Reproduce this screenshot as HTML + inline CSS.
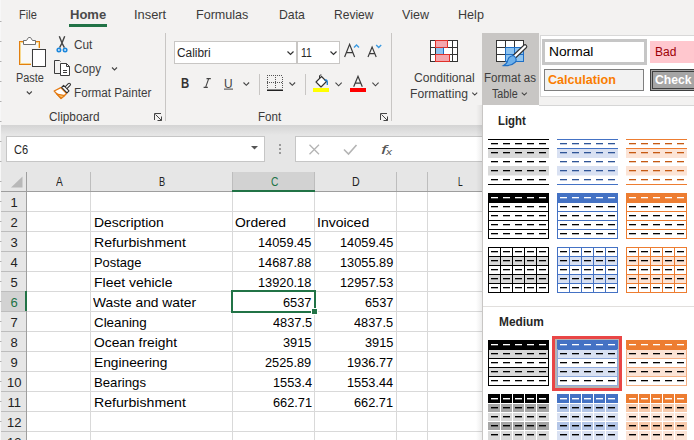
<!DOCTYPE html>
<html><head><meta charset="utf-8"><style>
html,body{margin:0;padding:0;}
body{width:694px;height:440px;position:relative;overflow:hidden;background:#fff;font-family:"Liberation Sans",sans-serif;}
.t{position:absolute;white-space:nowrap;line-height:1;transform-origin:0 0;}
svg{position:absolute;overflow:visible}
</style></head><body>
<div style="position:absolute;left:0px;top:0px;width:694px;height:125px;background:#f3f2f1"></div>
<div style="position:absolute;left:0px;top:125px;width:694px;height:47px;background:#e6e6e6"></div>
<div style="position:absolute;left:0px;top:125px;width:694px;height:10px;background:linear-gradient(#d4d4d4,#e6e6e6)"></div>
<div class="t" style="left:18.50px;top:8.00px;font-size:13px;color:#3b3a39;transform:scaleX(0.8499);">File</div>
<div class="t" style="left:69.70px;top:8.00px;font-size:13px;color:#4a4a4a;font-weight:bold;transform:scaleX(1.0024);">Home</div>
<div style="position:absolute;left:69px;top:24px;width:38px;height:3px;background:#217346"></div>
<div class="t" style="left:133.80px;top:8.00px;font-size:13px;color:#3b3a39;transform:scaleX(0.9904);">Insert</div>
<div class="t" style="left:196.40px;top:8.00px;font-size:13px;color:#3b3a39;transform:scaleX(0.9671);">Formulas</div>
<div class="t" style="left:278.50px;top:8.00px;font-size:13px;color:#3b3a39;transform:scaleX(0.9429);">Data</div>
<div class="t" style="left:334.40px;top:8.00px;font-size:13px;color:#3b3a39;transform:scaleX(0.9258);">Review</div>
<div class="t" style="left:402.00px;top:8.00px;font-size:13px;color:#3b3a39;transform:scaleX(0.9651);">View</div>
<div class="t" style="left:457.50px;top:8.00px;font-size:13px;color:#3b3a39;transform:scaleX(0.9686);">Help</div>
<div class="t" style="left:16.40px;top:71.75px;font-size:12.5px;color:#3d3d3d;transform:scaleX(0.8729);">Paste</div>
<div class="t" style="left:73.50px;top:38.75px;font-size:12.5px;color:#3d3d3d;transform:scaleX(0.9460);">Cut</div>
<div class="t" style="left:73.50px;top:63.05px;font-size:12.5px;color:#3d3d3d;transform:scaleX(0.9254);">Copy</div>
<div class="t" style="left:73.50px;top:87.05px;font-size:12.5px;color:#3d3d3d;transform:scaleX(0.9351);">Format Painter</div>
<div class="t" style="left:49.40px;top:110.75px;font-size:12.5px;color:#3b3a39;transform:scaleX(0.9458);">Clipboard</div>
<div class="t" style="left:258.40px;top:110.75px;font-size:12.5px;color:#3b3a39;transform:scaleX(0.9275);">Font</div>
<div style="position:absolute;left:165px;top:33px;width:1px;height:88px;background:#c8c6c4"></div>
<div style="position:absolute;left:391px;top:33px;width:1px;height:88px;background:#c8c6c4"></div>
<svg style="left:0;top:0" width="694" height="130" viewBox="0 0 694 130"><rect x="19.5" y="41.5" width="20" height="23" fill="#f8f8f8" stroke="#e27f0f" stroke-width="1"/><rect x="20.5" y="42.5" width="18" height="21" fill="none" stroke="#f7d88f" stroke-width="1"/><path d="M23.5 44.5 V40.5 H26.5 L28.5 37.5 H30.5 L32.5 40.5 H35.5 V44.5 Z" fill="#fff" stroke="#707070" stroke-width="1"/><rect x="31" y="48" width="16" height="19.5" fill="#f3f2f1"/><rect x="32.5" y="49.5" width="13" height="17" fill="#fff" stroke="#3c3c3c" stroke-width="1"/><path d="M59.3 36.3 L62 43 L59.6 47.6 M64.7 36.3 L62 43 L64.4 47.6" fill="none" stroke="#444" stroke-width="1.4"/><circle cx="58.9" cy="49.9" r="1.75" fill="#cfe4f7" stroke="#1b87dc" stroke-width="1.5"/><circle cx="65.1" cy="49.9" r="1.75" fill="#cfe4f7" stroke="#1b87dc" stroke-width="1.5"/><path d="M60.5 73.5 H54.5 V60.5 H59.5 L60.5 61.5" fill="none" stroke="#3c3c3c" stroke-width="1"/><path d="M60.5 63.5 H66.5 L69.5 66.5 V75.5 H60.5 Z" fill="#fff" stroke="#3c3c3c" stroke-width="1"/><path d="M66.5 63.5 V66.5 H69.5" fill="none" stroke="#3c3c3c" stroke-width="1"/><path d="M63 70.5 H67 M63 72.5 H67" stroke="#3c3c3c" stroke-width="1"/><path d="M54.2 91 L60.8 87.6 L66.6 93.6 L61 98.6 Z" fill="#fff" stroke="#e47a12" stroke-width="1.3" stroke-linejoin="round"/><path d="M56.8 94 L64.8 95.6 L61.2 98.2 Z" fill="#f7c46a" stroke="#e47a12" stroke-width="1.1" stroke-linejoin="round"/><path d="M65.8 88 L69.2 84.6" stroke="#333" stroke-width="3.6" stroke-linecap="round"/><path d="M65.8 88 L69.2 84.6" stroke="#fff" stroke-width="1.4" stroke-linecap="round"/><path d="M61.6 87.4 L63.6 85.4 L69 90.8 L67 92.8 Z" fill="#fff" stroke="#333" stroke-width="1.1" stroke-linejoin="round"/><path d="M26.8 91.5 L29.3 94 L31.8 91.5" fill="none" stroke="#444" stroke-width="1.1"/><path d="M112 67.5 L114.5 70 L117 67.5" fill="none" stroke="#444" stroke-width="1.1"/><path d="M154.5 120 V113.5 H161 M155.5 114.5 L161.5 120.5 M161.5 116.5 V120.5 H157.5" fill="none" stroke="#444" stroke-width="1"/><path d="M380.5 120 V113.5 H387 M381.5 114.5 L387.5 120.5 M387.5 116.5 V120.5 H383.5" fill="none" stroke="#444" stroke-width="1"/></svg>
<div style="position:absolute;left:174px;top:41px;width:123px;height:23px;background:#fff;border:1px solid #c8c6c4;box-sizing:border-box"></div>
<div style="position:absolute;left:297px;top:41px;width:43px;height:23px;background:#fff;border:1px solid #c8c6c4;box-sizing:border-box"></div>
<div class="t" style="left:177.40px;top:46.75px;font-size:12.5px;color:#262626;transform:scaleX(0.9485);">Calibri</div>
<div class="t" style="left:300.50px;top:46.75px;font-size:12.5px;color:#262626;transform:scaleX(0.8324);">11</div>
<div class="t" style="left:181.20px;top:76.00px;font-size:14px;color:#333;font-weight:bold;transform:scaleX(0.8112);">B</div>
<div class="t" style="left:224.20px;top:77.00px;font-size:13px;color:#444;transform:scaleX(0.9163);">U</div>
<svg style="left:0;top:0" width="694" height="130" viewBox="0 0 694 130"><g fill="#555"><rect x="267" y="75" width="1" height="1"/><rect x="267" y="82" width="1" height="1"/><rect x="269" y="75" width="1" height="1"/><rect x="269" y="82" width="1" height="1"/><rect x="271" y="75" width="1" height="1"/><rect x="271" y="82" width="1" height="1"/><rect x="273" y="75" width="1" height="1"/><rect x="273" y="82" width="1" height="1"/><rect x="275" y="75" width="1" height="1"/><rect x="275" y="82" width="1" height="1"/><rect x="277" y="75" width="1" height="1"/><rect x="277" y="82" width="1" height="1"/><rect x="279" y="75" width="1" height="1"/><rect x="279" y="82" width="1" height="1"/><rect x="281" y="75" width="1" height="1"/><rect x="281" y="82" width="1" height="1"/><rect x="267" y="77" width="1" height="1"/><rect x="282" y="77" width="1" height="1"/><rect x="275" y="77" width="1" height="1"/><rect x="267" y="79" width="1" height="1"/><rect x="282" y="79" width="1" height="1"/><rect x="275" y="79" width="1" height="1"/><rect x="267" y="81" width="1" height="1"/><rect x="282" y="81" width="1" height="1"/><rect x="275" y="81" width="1" height="1"/><rect x="267" y="83" width="1" height="1"/><rect x="282" y="83" width="1" height="1"/><rect x="275" y="83" width="1" height="1"/><rect x="267" y="85" width="1" height="1"/><rect x="282" y="85" width="1" height="1"/><rect x="275" y="85" width="1" height="1"/><rect x="267" y="87" width="1" height="1"/><rect x="282" y="87" width="1" height="1"/><rect x="275" y="87" width="1" height="1"/></g><path d="M206.5 78.6 H210.8 M208.7 78.6 L205.6 87.4 M203.6 87.4 H207.8" fill="none" stroke="#444" stroke-width="1.1"/><path d="M344.6 57 L349.6 44.3 L354.6 57 M346.3 52.6 H352.9" fill="none" stroke="#3a3a3a" stroke-width="1.2"/><path d="M368 57 L372.1 47 L376.2 57 M369.4 53.6 H374.8" fill="none" stroke="#3a3a3a" stroke-width="1.15"/><path d="M353.7 86.8 L358 76.3 L362.3 86.8 M355.2 83.1 H360.8" fill="none" stroke="#3a3a3a" stroke-width="1.2"/></svg>
<svg style="left:0;top:0" width="694" height="130" viewBox="0 0 694 130"><path d="M287.5 51.5 L290.5 54.5 L293.5 51.5" fill="none" stroke="#333" stroke-width="1.2"/><path d="M330.5 51.5 L333.5 54.5 L336.5 51.5" fill="none" stroke="#333" stroke-width="1.2"/><path d="M354 47.5 L356.5 45 L359 47.5" fill="none" stroke="#3b9ae1" stroke-width="1.4"/><path d="M376.2 45 L378.7 47.5 L381.2 45" fill="none" stroke="#3b9ae1" stroke-width="1.4"/><rect x="224" y="88.6" width="9" height="1" fill="#444"/><path d="M243.5 82.5 L246.3 85.3 L249.1 82.5" fill="none" stroke="#444" stroke-width="1.1"/><rect x="259" y="74" width="1" height="21" fill="#c8c6c4"/><rect x="305" y="74" width="1" height="21" fill="#c8c6c4"/><rect x="267" y="89.5" width="16" height="1.5" fill="#222"/><path d="M289.5 82.5 L292.3 85.3 L295.1 82.5" fill="none" stroke="#444" stroke-width="1.1"/><path d="M316 82 L321.5 76.5 L326.5 81.5 L321 87 Z" fill="#fff" stroke="#333" stroke-width="1.1" stroke-linejoin="round"/><path d="M319.5 78.5 V76 Q319.8 74.5 321.5 75" fill="none" stroke="#333" stroke-width="1"/><path d="M324.5 80.5 Q327 79 327.3 82 V85" fill="none" stroke="#1e7fd0" stroke-width="1.3"/><rect x="313" y="88" width="16" height="4" fill="#ffff00"/><path d="M335.5 82.7 L338.6 85.8 L341.7 82.7" fill="none" stroke="#444" stroke-width="1.1"/><rect x="350" y="88" width="16" height="4" fill="#ff0000"/><path d="M372.4 82.7 L375.5 85.8 L378.6 82.7" fill="none" stroke="#444" stroke-width="1.1"/></svg>
<div style="position:absolute;left:482px;top:33px;width:57px;height:73px;background:#c8c6c4"></div>
<div class="t" style="left:413.70px;top:72.05px;font-size:12.5px;color:#3d3d3d;transform:scaleX(0.9722);">Conditional</div>
<div class="t" style="left:409.50px;top:87.55px;font-size:12.5px;color:#3d3d3d;transform:scaleX(0.9692);">Formatting</div>
<div class="t" style="left:484.00px;top:72.25px;font-size:12.5px;color:#3d3d3d;transform:scaleX(0.9242);">Format as</div>
<div class="t" style="left:492.00px;top:87.65px;font-size:12.5px;color:#3d3d3d;transform:scaleX(0.8599);">Table</div>
<svg style="left:0;top:0" width="694" height="130" viewBox="0 0 694 130"><path d="M472.3 92.7 L474.75 95.1 L477.2 92.7" fill="none" stroke="#444" stroke-width="1.1"/><path d="M521.8 92.7 L524.3 95.1 L526.8 92.7" fill="none" stroke="#444" stroke-width="1.1"/><rect x="430.5" y="40.5" width="27" height="21" fill="#fff" stroke="#333" stroke-width="1"/><path d="M435.5 40.5 V61.5 M452.5 40.5 V61.5 M430.5 47.5 H457.5 M430.5 54.5 H457.5" fill="none" stroke="#333" stroke-width="1"/><rect x="435.5" y="40.5" width="12" height="7" fill="#f4a6ad" stroke="#e0302a" stroke-width="1"/><rect x="436" y="48" width="7" height="6" fill="#8cc2f0"/><path d="M443.5 47.5 V54.5" stroke="#1b6ec2" stroke-width="1"/><rect x="435.5" y="54.5" width="14" height="7" fill="#f4a6ad" stroke="#e0302a" stroke-width="1"/><rect x="496.5" y="40.5" width="27" height="21" fill="#fff" stroke="#333" stroke-width="1"/><rect x="505.5" y="47.5" width="18" height="14" fill="#8ec3ef" stroke="#1f6fc5" stroke-width="1"/><path d="M505.5 40.5 V61.5 M514.5 40.5 V61.5 M496.5 47.5 H523.5 M496.5 54.5 H523.5" fill="none" stroke="#333" stroke-width="1"/><path d="M505.5 47.5 H523.5 V61.5 M505.5 47.5 V61.5 M514.5 47.5 V61.5 M505.5 54.5 H523.5" fill="none" stroke="#1f6fc5" stroke-width="1"/><path d="M513.5 57.5 L525 46.5" stroke="#333" stroke-width="4.6" stroke-linecap="round"/><path d="M513.5 57.5 L525 46.5" stroke="#fff" stroke-width="2.4" stroke-linecap="round"/><path d="M513.5 55.5 Q517.5 58.5 515.5 62 Q511.5 66.2 503.5 65.6 Q507 63.8 507.6 60.6 Q508.6 56 513.5 55.5 Z" fill="#6db0eb" stroke="#1f6fc5" stroke-width="1.1"/></svg>
<div style="position:absolute;left:540px;top:35px;width:154px;height:62px;background:#fff;border:1px solid #d8d8d8;border-right:none;box-sizing:border-box"></div>
<div style="position:absolute;left:542px;top:39px;width:105px;height:26px;background:#fff;border:3px solid #c6c6c6;box-sizing:border-box"></div>
<div class="t" style="left:549.00px;top:45.75px;font-size:12.5px;color:#000;transform:scaleX(1.1021);">Normal</div>
<div style="position:absolute;left:650px;top:41px;width:44px;height:22px;background:#ffc7ce"></div>
<div class="t" style="left:654.60px;top:45.75px;font-size:12.5px;color:#9c0006;transform:scaleX(0.9623);">Bad</div>
<div style="position:absolute;left:544px;top:69px;width:100px;height:22px;background:#f2f2f2;border:1px solid #7f7f7f;box-sizing:border-box"></div>
<div class="t" style="left:548.40px;top:74.15px;font-size:12.5px;color:#fa7d00;font-weight:bold;transform:scaleX(1.0078);">Calculation</div>
<div style="position:absolute;left:650px;top:69px;width:44px;height:22px;background:#a5a5a5;border:3px double #3f3f3f;border-right:none;box-sizing:border-box"></div>
<div class="t" style="left:654.60px;top:73.65px;font-size:12.5px;color:#fff;font-weight:bold;transform:scaleX(0.9750);">Check</div>
<div style="position:absolute;left:6px;top:136px;width:259px;height:26px;background:#fff;border:1px solid #c6c6c6;box-sizing:border-box"></div>
<div style="position:absolute;left:295px;top:136px;width:399px;height:26px;background:#fff;border:1px solid #c6c6c6;border-right:none;box-sizing:border-box"></div>
<div class="t" style="left:13.50px;top:143.75px;font-size:12.5px;color:#262626;transform:scaleX(0.8826);">C6</div>
<svg style="left:0;top:0" width="694" height="200" viewBox="0 0 694 200"><path d="M251 146 H258 L254.5 149.5 Z" fill="#555"/><rect x="279" y="144" width="2" height="2" fill="#9a9a9a"/><rect x="279" y="148" width="2" height="2" fill="#9a9a9a"/><rect x="279" y="152" width="2" height="2" fill="#9a9a9a"/><path d="M309.5 144.8 L319 154.3 M319 144.8 L309.5 154.3" stroke="#b4b4b4" stroke-width="1.3"/><path d="M344 149.5 L348.5 154 L356.5 145" fill="none" stroke="#b4b4b4" stroke-width="1.6"/></svg>
<div class="t" style="left:381.00px;top:143.00px;font-size:13px;color:#555;transform:scaleX(1.6484);font-style:italic;font-family:"Liberation Serif",serif;">f</div>
<div class="t" style="left:386.00px;top:146.75px;font-size:9.5px;color:#555;transform:scaleX(1.2632);font-style:italic;font-family:"Liberation Serif",serif;">x</div>
<div style="position:absolute;left:0px;top:192px;width:694px;height:248px;background:#fff"></div>
<div style="position:absolute;left:0px;top:172px;width:694px;height:20px;background:#e6e6e6"></div>
<div style="position:absolute;left:232px;top:172px;width:82px;height:19px;background:#d2d2d2"></div>
<div style="position:absolute;left:0px;top:192px;width:26px;height:248px;background:#e6e6e6"></div>
<div style="position:absolute;left:0px;top:291px;width:26px;height:20px;background:#d2d2d2"></div>
<svg style="left:0;top:0" width="694" height="440" viewBox="0 0 694 440"><rect x="27" y="211" width="667" height="1" fill="#d9d9d9"/><rect x="0" y="211" width="26" height="1" fill="#bdbdbd"/><rect x="27" y="231" width="667" height="1" fill="#d9d9d9"/><rect x="0" y="231" width="26" height="1" fill="#bdbdbd"/><rect x="27" y="251" width="667" height="1" fill="#d9d9d9"/><rect x="0" y="251" width="26" height="1" fill="#bdbdbd"/><rect x="27" y="271" width="667" height="1" fill="#d9d9d9"/><rect x="0" y="271" width="26" height="1" fill="#bdbdbd"/><rect x="27" y="291" width="667" height="1" fill="#d9d9d9"/><rect x="0" y="291" width="26" height="1" fill="#bdbdbd"/><rect x="27" y="311" width="667" height="1" fill="#d9d9d9"/><rect x="0" y="311" width="26" height="1" fill="#bdbdbd"/><rect x="27" y="331" width="667" height="1" fill="#d9d9d9"/><rect x="0" y="331" width="26" height="1" fill="#bdbdbd"/><rect x="27" y="351" width="667" height="1" fill="#d9d9d9"/><rect x="0" y="351" width="26" height="1" fill="#bdbdbd"/><rect x="27" y="371" width="667" height="1" fill="#d9d9d9"/><rect x="0" y="371" width="26" height="1" fill="#bdbdbd"/><rect x="27" y="391" width="667" height="1" fill="#d9d9d9"/><rect x="0" y="391" width="26" height="1" fill="#bdbdbd"/><rect x="27" y="411" width="667" height="1" fill="#d9d9d9"/><rect x="0" y="411" width="26" height="1" fill="#bdbdbd"/><rect x="27" y="431" width="667" height="1" fill="#d9d9d9"/><rect x="0" y="431" width="26" height="1" fill="#bdbdbd"/><rect x="90" y="192" width="1" height="248" fill="#d9d9d9"/><rect x="90" y="172" width="1" height="19" fill="#bdbdbd"/><rect x="232" y="192" width="1" height="248" fill="#d9d9d9"/><rect x="232" y="172" width="1" height="19" fill="#bdbdbd"/><rect x="314" y="192" width="1" height="248" fill="#d9d9d9"/><rect x="314" y="172" width="1" height="19" fill="#bdbdbd"/><rect x="396" y="192" width="1" height="248" fill="#d9d9d9"/><rect x="396" y="172" width="1" height="19" fill="#bdbdbd"/><rect x="427" y="192" width="1" height="248" fill="#d9d9d9"/><rect x="427" y="172" width="1" height="19" fill="#bdbdbd"/><rect x="0" y="191" width="694" height="1" fill="#9e9e9e"/><rect x="26" y="172" width="1" height="268" fill="#9e9e9e"/><rect x="232" y="190" width="83" height="2" fill="#217346"/><rect x="25" y="291" width="2" height="20" fill="#217346"/><path d="M11 187.5 L22.5 176.5 V187.5 Z" fill="#b8b8b8"/></svg>
<div class="t" style="left:55.70px;top:175.75px;font-size:12.5px;color:#222;transform:scaleX(0.8156);">A</div>
<div class="t" style="left:158.60px;top:175.75px;font-size:12.5px;color:#222;transform:scaleX(0.7436);">B</div>
<div class="t" style="left:270.60px;top:175.75px;font-size:12.5px;color:#217346;transform:scaleX(0.8199);">C</div>
<div class="t" style="left:351.70px;top:175.75px;font-size:12.5px;color:#222;transform:scaleX(0.8532);">D</div>
<div class="t" style="left:458.00px;top:175.75px;font-size:12.5px;color:#222;transform:scaleX(0.6763);">L</div>
<div class="t" style="left:10.59px;top:196.00px;font-size:13px;color:#222;transform:scaleX(1.0000);">1</div>
<div class="t" style="left:10.59px;top:216.00px;font-size:13px;color:#222;transform:scaleX(1.0000);">2</div>
<div class="t" style="left:93.50px;top:216.00px;font-size:13px;color:#000;transform:scaleX(1.0734);">Description</div>
<div class="t" style="left:235.30px;top:216.00px;font-size:13px;color:#000;transform:scaleX(1.0674);">Ordered</div>
<div class="t" style="left:317.30px;top:216.00px;font-size:13px;color:#000;transform:scaleX(1.0780);">Invoiced</div>
<div class="t" style="left:10.59px;top:236.00px;font-size:13px;color:#222;transform:scaleX(1.0000);">3</div>
<div class="t" style="left:93.80px;top:236.00px;font-size:13px;color:#000;transform:scaleX(1.0859);">Refurbishment</div>
<div class="t" style="left:258.35px;top:236.00px;font-size:13px;color:#000;transform:scaleX(0.9820);">14059.45</div>
<div class="t" style="left:340.15px;top:236.00px;font-size:13px;color:#000;transform:scaleX(0.9820);">14059.45</div>
<div class="t" style="left:10.59px;top:256.00px;font-size:13px;color:#222;transform:scaleX(1.0000);">4</div>
<div class="t" style="left:93.80px;top:256.00px;font-size:13px;color:#000;transform:scaleX(0.9917);">Postage</div>
<div class="t" style="left:258.35px;top:256.00px;font-size:13px;color:#000;transform:scaleX(0.9820);">14687.88</div>
<div class="t" style="left:340.15px;top:256.00px;font-size:13px;color:#000;transform:scaleX(0.9820);">13055.89</div>
<div class="t" style="left:10.59px;top:276.00px;font-size:13px;color:#222;transform:scaleX(1.0000);">5</div>
<div class="t" style="left:93.80px;top:276.00px;font-size:13px;color:#000;transform:scaleX(1.0742);">Fleet vehicle</div>
<div class="t" style="left:258.35px;top:276.00px;font-size:13px;color:#000;transform:scaleX(0.9820);">13920.18</div>
<div class="t" style="left:340.15px;top:276.00px;font-size:13px;color:#000;transform:scaleX(0.9820);">12957.53</div>
<div class="t" style="left:10.59px;top:296.00px;font-size:13px;color:#217346;transform:scaleX(1.0000);">6</div>
<div class="t" style="left:93.10px;top:296.00px;font-size:13px;color:#000;transform:scaleX(1.0623);">Waste and water</div>
<div class="t" style="left:283.20px;top:296.00px;font-size:13px;color:#000;transform:scaleX(0.9820);">6537</div>
<div class="t" style="left:365.00px;top:296.00px;font-size:13px;color:#000;transform:scaleX(0.9820);">6537</div>
<div class="t" style="left:10.59px;top:316.00px;font-size:13px;color:#222;transform:scaleX(1.0000);">7</div>
<div class="t" style="left:93.80px;top:316.00px;font-size:13px;color:#000;transform:scaleX(1.0271);">Cleaning</div>
<div class="t" style="left:272.55px;top:316.00px;font-size:13px;color:#000;transform:scaleX(0.9820);">4837.5</div>
<div class="t" style="left:354.35px;top:316.00px;font-size:13px;color:#000;transform:scaleX(0.9820);">4837.5</div>
<div class="t" style="left:10.59px;top:336.00px;font-size:13px;color:#222;transform:scaleX(1.0000);">8</div>
<div class="t" style="left:93.50px;top:336.00px;font-size:13px;color:#000;transform:scaleX(1.0636);">Ocean freight</div>
<div class="t" style="left:283.20px;top:336.00px;font-size:13px;color:#000;transform:scaleX(0.9820);">3915</div>
<div class="t" style="left:365.00px;top:336.00px;font-size:13px;color:#000;transform:scaleX(0.9820);">3915</div>
<div class="t" style="left:10.59px;top:356.00px;font-size:13px;color:#222;transform:scaleX(1.0000);">9</div>
<div class="t" style="left:93.80px;top:356.00px;font-size:13px;color:#000;transform:scaleX(1.0565);">Engineering</div>
<div class="t" style="left:265.45px;top:356.00px;font-size:13px;color:#000;transform:scaleX(0.9820);">2525.89</div>
<div class="t" style="left:347.25px;top:356.00px;font-size:13px;color:#000;transform:scaleX(0.9820);">1936.77</div>
<div class="t" style="left:6.97px;top:376.00px;font-size:13px;color:#222;transform:scaleX(1.0000);">10</div>
<div class="t" style="left:93.80px;top:376.00px;font-size:13px;color:#000;transform:scaleX(1.0134);">Bearings</div>
<div class="t" style="left:272.55px;top:376.00px;font-size:13px;color:#000;transform:scaleX(0.9820);">1553.4</div>
<div class="t" style="left:347.25px;top:376.00px;font-size:13px;color:#000;transform:scaleX(0.9820);">1553.44</div>
<div class="t" style="left:7.45px;top:396.00px;font-size:13px;color:#222;transform:scaleX(1.0000);">11</div>
<div class="t" style="left:93.80px;top:396.00px;font-size:13px;color:#000;transform:scaleX(1.0859);">Refurbishment</div>
<div class="t" style="left:272.55px;top:396.00px;font-size:13px;color:#000;transform:scaleX(0.9820);">662.71</div>
<div class="t" style="left:354.35px;top:396.00px;font-size:13px;color:#000;transform:scaleX(0.9820);">662.71</div>
<div class="t" style="left:6.97px;top:416.00px;font-size:13px;color:#222;transform:scaleX(1.0000);">12</div>
<div class="t" style="left:6.97px;top:436.00px;font-size:13px;color:#222;transform:scaleX(1.0000);">13</div>
<div style="position:absolute;left:231px;top:290px;width:85px;height:23px;border:2px solid #217346;box-sizing:border-box"></div>
<div style="position:absolute;left:312px;top:309px;width:5px;height:5px;background:#217346;outline:1px solid #fff"></div>
<div style="position:absolute;left:476px;top:105px;width:6px;height:335px;background:linear-gradient(to right,rgba(0,0,0,0),rgba(0,0,0,0.07))"></div>
<div style="position:absolute;left:482px;top:105px;width:212px;height:335px;background:#fff;border-left:1px solid #c8c6c4;box-sizing:border-box"></div>
<div style="position:absolute;left:539px;top:105px;width:155px;height:1px;background:#d6d6d6"></div>
<div class="t" style="left:498.20px;top:114.75px;font-size:12.5px;color:#262626;font-weight:bold;transform:scaleX(0.9104);">Light</div>
<div style="position:absolute;left:483px;top:306px;width:211px;height:1px;background:#e1dfdd"></div>
<div class="t" style="left:498.60px;top:315.75px;font-size:12.5px;color:#262626;font-weight:bold;transform:scaleX(0.9508);">Medium</div>
<svg style="left:0;top:0" width="694" height="440" viewBox="0 0 694 440"><rect x="488" y="139" width="61" height="46" fill="#fff"/><rect x="488" y="149" width="61" height="9" fill="#d9d9d9"/><rect x="488" y="166" width="61" height="9.5" fill="#d9d9d9"/><rect x="488" y="139" width="61" height="1" fill="#000"/><rect x="488" y="148" width="61" height="1" fill="#000"/><rect x="488" y="184" width="61" height="1" fill="#000"/><rect x="491" y="143" width="7" height="1.3" fill="#000"/><rect x="503" y="143" width="7" height="1.3" fill="#000"/><rect x="515" y="143" width="7" height="1.3" fill="#000"/><rect x="527" y="143" width="7" height="1.3" fill="#000"/><rect x="539" y="143" width="7" height="1.3" fill="#000"/><rect x="491" y="152" width="7" height="1.3" fill="#000"/><rect x="503" y="152" width="7" height="1.3" fill="#000"/><rect x="515" y="152" width="7" height="1.3" fill="#000"/><rect x="527" y="152" width="7" height="1.3" fill="#000"/><rect x="539" y="152" width="7" height="1.3" fill="#000"/><rect x="491" y="161" width="7" height="1.3" fill="#000"/><rect x="503" y="161" width="7" height="1.3" fill="#000"/><rect x="515" y="161" width="7" height="1.3" fill="#000"/><rect x="527" y="161" width="7" height="1.3" fill="#000"/><rect x="539" y="161" width="7" height="1.3" fill="#000"/><rect x="491" y="170" width="7" height="1.3" fill="#000"/><rect x="503" y="170" width="7" height="1.3" fill="#000"/><rect x="515" y="170" width="7" height="1.3" fill="#000"/><rect x="527" y="170" width="7" height="1.3" fill="#000"/><rect x="539" y="170" width="7" height="1.3" fill="#000"/><rect x="491" y="179" width="7" height="1.3" fill="#000"/><rect x="503" y="179" width="7" height="1.3" fill="#000"/><rect x="515" y="179" width="7" height="1.3" fill="#000"/><rect x="527" y="179" width="7" height="1.3" fill="#000"/><rect x="539" y="179" width="7" height="1.3" fill="#000"/><rect x="557" y="139" width="61" height="46" fill="#fff"/><rect x="557" y="149" width="61" height="9" fill="#d9e1f2"/><rect x="557" y="166" width="61" height="9.5" fill="#d9e1f2"/><rect x="557" y="139" width="61" height="1" fill="#4472c4"/><rect x="557" y="148" width="61" height="1" fill="#4472c4"/><rect x="557" y="184" width="61" height="1" fill="#4472c4"/><rect x="560" y="143" width="7" height="1.3" fill="#2f5597"/><rect x="572" y="143" width="7" height="1.3" fill="#2f5597"/><rect x="584" y="143" width="7" height="1.3" fill="#2f5597"/><rect x="596" y="143" width="7" height="1.3" fill="#2f5597"/><rect x="608" y="143" width="7" height="1.3" fill="#2f5597"/><rect x="560" y="152" width="7" height="1.3" fill="#2f5597"/><rect x="572" y="152" width="7" height="1.3" fill="#2f5597"/><rect x="584" y="152" width="7" height="1.3" fill="#2f5597"/><rect x="596" y="152" width="7" height="1.3" fill="#2f5597"/><rect x="608" y="152" width="7" height="1.3" fill="#2f5597"/><rect x="560" y="161" width="7" height="1.3" fill="#2f5597"/><rect x="572" y="161" width="7" height="1.3" fill="#2f5597"/><rect x="584" y="161" width="7" height="1.3" fill="#2f5597"/><rect x="596" y="161" width="7" height="1.3" fill="#2f5597"/><rect x="608" y="161" width="7" height="1.3" fill="#2f5597"/><rect x="560" y="170" width="7" height="1.3" fill="#2f5597"/><rect x="572" y="170" width="7" height="1.3" fill="#2f5597"/><rect x="584" y="170" width="7" height="1.3" fill="#2f5597"/><rect x="596" y="170" width="7" height="1.3" fill="#2f5597"/><rect x="608" y="170" width="7" height="1.3" fill="#2f5597"/><rect x="560" y="179" width="7" height="1.3" fill="#2f5597"/><rect x="572" y="179" width="7" height="1.3" fill="#2f5597"/><rect x="584" y="179" width="7" height="1.3" fill="#2f5597"/><rect x="596" y="179" width="7" height="1.3" fill="#2f5597"/><rect x="608" y="179" width="7" height="1.3" fill="#2f5597"/><rect x="626" y="139" width="61" height="46" fill="#fff"/><rect x="626" y="149" width="61" height="9" fill="#fce4d6"/><rect x="626" y="166" width="61" height="9.5" fill="#fce4d6"/><rect x="626" y="139" width="61" height="1" fill="#ed7d31"/><rect x="626" y="148" width="61" height="1" fill="#ed7d31"/><rect x="626" y="184" width="61" height="1" fill="#ed7d31"/><rect x="629" y="143" width="7" height="1.3" fill="#c65911"/><rect x="641" y="143" width="7" height="1.3" fill="#c65911"/><rect x="653" y="143" width="7" height="1.3" fill="#c65911"/><rect x="665" y="143" width="7" height="1.3" fill="#c65911"/><rect x="677" y="143" width="7" height="1.3" fill="#c65911"/><rect x="629" y="152" width="7" height="1.3" fill="#c65911"/><rect x="641" y="152" width="7" height="1.3" fill="#c65911"/><rect x="653" y="152" width="7" height="1.3" fill="#c65911"/><rect x="665" y="152" width="7" height="1.3" fill="#c65911"/><rect x="677" y="152" width="7" height="1.3" fill="#c65911"/><rect x="629" y="161" width="7" height="1.3" fill="#c65911"/><rect x="641" y="161" width="7" height="1.3" fill="#c65911"/><rect x="653" y="161" width="7" height="1.3" fill="#c65911"/><rect x="665" y="161" width="7" height="1.3" fill="#c65911"/><rect x="677" y="161" width="7" height="1.3" fill="#c65911"/><rect x="629" y="170" width="7" height="1.3" fill="#c65911"/><rect x="641" y="170" width="7" height="1.3" fill="#c65911"/><rect x="653" y="170" width="7" height="1.3" fill="#c65911"/><rect x="665" y="170" width="7" height="1.3" fill="#c65911"/><rect x="677" y="170" width="7" height="1.3" fill="#c65911"/><rect x="629" y="179" width="7" height="1.3" fill="#c65911"/><rect x="641" y="179" width="7" height="1.3" fill="#c65911"/><rect x="653" y="179" width="7" height="1.3" fill="#c65911"/><rect x="665" y="179" width="7" height="1.3" fill="#c65911"/><rect x="677" y="179" width="7" height="1.3" fill="#c65911"/><rect x="488" y="193" width="61" height="46" fill="#fff"/><rect x="488" y="193" width="61" height="10" fill="#000"/><rect x="488" y="211" width="61" height="1" fill="#000"/><rect x="488" y="220" width="61" height="1" fill="#000"/><rect x="488" y="229" width="61" height="1" fill="#000"/><rect x="488" y="238" width="61" height="1" fill="#000"/><rect x="488" y="193" width="1" height="46" fill="#000"/><rect x="548" y="193" width="1" height="46" fill="#000"/><rect x="491" y="197" width="7" height="1.3" fill="#fff"/><rect x="503" y="197" width="7" height="1.3" fill="#fff"/><rect x="515" y="197" width="7" height="1.3" fill="#fff"/><rect x="527" y="197" width="7" height="1.3" fill="#fff"/><rect x="539" y="197" width="7" height="1.3" fill="#fff"/><rect x="491" y="206" width="7" height="1.3" fill="#000"/><rect x="503" y="206" width="7" height="1.3" fill="#000"/><rect x="515" y="206" width="7" height="1.3" fill="#000"/><rect x="527" y="206" width="7" height="1.3" fill="#000"/><rect x="539" y="206" width="7" height="1.3" fill="#000"/><rect x="491" y="215" width="7" height="1.3" fill="#000"/><rect x="503" y="215" width="7" height="1.3" fill="#000"/><rect x="515" y="215" width="7" height="1.3" fill="#000"/><rect x="527" y="215" width="7" height="1.3" fill="#000"/><rect x="539" y="215" width="7" height="1.3" fill="#000"/><rect x="491" y="224" width="7" height="1.3" fill="#000"/><rect x="503" y="224" width="7" height="1.3" fill="#000"/><rect x="515" y="224" width="7" height="1.3" fill="#000"/><rect x="527" y="224" width="7" height="1.3" fill="#000"/><rect x="539" y="224" width="7" height="1.3" fill="#000"/><rect x="491" y="233" width="7" height="1.3" fill="#000"/><rect x="503" y="233" width="7" height="1.3" fill="#000"/><rect x="515" y="233" width="7" height="1.3" fill="#000"/><rect x="527" y="233" width="7" height="1.3" fill="#000"/><rect x="539" y="233" width="7" height="1.3" fill="#000"/><rect x="557" y="193" width="61" height="46" fill="#fff"/><rect x="557" y="193" width="61" height="10" fill="#4472c4"/><rect x="557" y="211" width="61" height="1" fill="#4472c4"/><rect x="557" y="220" width="61" height="1" fill="#4472c4"/><rect x="557" y="229" width="61" height="1" fill="#4472c4"/><rect x="557" y="238" width="61" height="1" fill="#4472c4"/><rect x="557" y="193" width="1" height="46" fill="#4472c4"/><rect x="617" y="193" width="1" height="46" fill="#4472c4"/><rect x="560" y="197" width="7" height="1.3" fill="#fff"/><rect x="572" y="197" width="7" height="1.3" fill="#fff"/><rect x="584" y="197" width="7" height="1.3" fill="#fff"/><rect x="596" y="197" width="7" height="1.3" fill="#fff"/><rect x="608" y="197" width="7" height="1.3" fill="#fff"/><rect x="560" y="206" width="7" height="1.3" fill="#000"/><rect x="572" y="206" width="7" height="1.3" fill="#000"/><rect x="584" y="206" width="7" height="1.3" fill="#000"/><rect x="596" y="206" width="7" height="1.3" fill="#000"/><rect x="608" y="206" width="7" height="1.3" fill="#000"/><rect x="560" y="215" width="7" height="1.3" fill="#000"/><rect x="572" y="215" width="7" height="1.3" fill="#000"/><rect x="584" y="215" width="7" height="1.3" fill="#000"/><rect x="596" y="215" width="7" height="1.3" fill="#000"/><rect x="608" y="215" width="7" height="1.3" fill="#000"/><rect x="560" y="224" width="7" height="1.3" fill="#000"/><rect x="572" y="224" width="7" height="1.3" fill="#000"/><rect x="584" y="224" width="7" height="1.3" fill="#000"/><rect x="596" y="224" width="7" height="1.3" fill="#000"/><rect x="608" y="224" width="7" height="1.3" fill="#000"/><rect x="560" y="233" width="7" height="1.3" fill="#000"/><rect x="572" y="233" width="7" height="1.3" fill="#000"/><rect x="584" y="233" width="7" height="1.3" fill="#000"/><rect x="596" y="233" width="7" height="1.3" fill="#000"/><rect x="608" y="233" width="7" height="1.3" fill="#000"/><rect x="626" y="193" width="61" height="46" fill="#fff"/><rect x="626" y="193" width="61" height="10" fill="#ed7d31"/><rect x="626" y="211" width="61" height="1" fill="#ed7d31"/><rect x="626" y="220" width="61" height="1" fill="#ed7d31"/><rect x="626" y="229" width="61" height="1" fill="#ed7d31"/><rect x="626" y="238" width="61" height="1" fill="#ed7d31"/><rect x="626" y="193" width="1" height="46" fill="#ed7d31"/><rect x="686" y="193" width="1" height="46" fill="#ed7d31"/><rect x="629" y="197" width="7" height="1.3" fill="#fff"/><rect x="641" y="197" width="7" height="1.3" fill="#fff"/><rect x="653" y="197" width="7" height="1.3" fill="#fff"/><rect x="665" y="197" width="7" height="1.3" fill="#fff"/><rect x="677" y="197" width="7" height="1.3" fill="#fff"/><rect x="629" y="206" width="7" height="1.3" fill="#000"/><rect x="641" y="206" width="7" height="1.3" fill="#000"/><rect x="653" y="206" width="7" height="1.3" fill="#000"/><rect x="665" y="206" width="7" height="1.3" fill="#000"/><rect x="677" y="206" width="7" height="1.3" fill="#000"/><rect x="629" y="215" width="7" height="1.3" fill="#000"/><rect x="641" y="215" width="7" height="1.3" fill="#000"/><rect x="653" y="215" width="7" height="1.3" fill="#000"/><rect x="665" y="215" width="7" height="1.3" fill="#000"/><rect x="677" y="215" width="7" height="1.3" fill="#000"/><rect x="629" y="224" width="7" height="1.3" fill="#000"/><rect x="641" y="224" width="7" height="1.3" fill="#000"/><rect x="653" y="224" width="7" height="1.3" fill="#000"/><rect x="665" y="224" width="7" height="1.3" fill="#000"/><rect x="677" y="224" width="7" height="1.3" fill="#000"/><rect x="629" y="233" width="7" height="1.3" fill="#000"/><rect x="641" y="233" width="7" height="1.3" fill="#000"/><rect x="653" y="233" width="7" height="1.3" fill="#000"/><rect x="665" y="233" width="7" height="1.3" fill="#000"/><rect x="677" y="233" width="7" height="1.3" fill="#000"/><rect x="488" y="247" width="61" height="46" fill="#fff"/><rect x="488" y="256" width="61" height="9" fill="#d9d9d9"/><rect x="488" y="274" width="61" height="9" fill="#d9d9d9"/><rect x="488" y="247" width="61" height="1" fill="#000"/><rect x="488" y="256" width="61" height="1" fill="#000"/><rect x="488" y="265" width="61" height="1" fill="#000"/><rect x="488" y="274" width="61" height="1" fill="#000"/><rect x="488" y="283" width="61" height="1" fill="#000"/><rect x="488" y="292" width="61" height="1" fill="#000"/><rect x="488" y="247" width="1" height="46" fill="#000"/><rect x="500" y="247" width="1" height="46" fill="#000"/><rect x="512" y="247" width="1" height="46" fill="#000"/><rect x="524" y="247" width="1" height="46" fill="#000"/><rect x="536" y="247" width="1" height="46" fill="#000"/><rect x="548" y="247" width="1" height="46" fill="#000"/><rect x="491" y="251" width="7" height="1.3" fill="#000"/><rect x="503" y="251" width="7" height="1.3" fill="#000"/><rect x="515" y="251" width="7" height="1.3" fill="#000"/><rect x="527" y="251" width="7" height="1.3" fill="#000"/><rect x="539" y="251" width="7" height="1.3" fill="#000"/><rect x="491" y="260" width="7" height="1.3" fill="#000"/><rect x="503" y="260" width="7" height="1.3" fill="#000"/><rect x="515" y="260" width="7" height="1.3" fill="#000"/><rect x="527" y="260" width="7" height="1.3" fill="#000"/><rect x="539" y="260" width="7" height="1.3" fill="#000"/><rect x="491" y="269" width="7" height="1.3" fill="#000"/><rect x="503" y="269" width="7" height="1.3" fill="#000"/><rect x="515" y="269" width="7" height="1.3" fill="#000"/><rect x="527" y="269" width="7" height="1.3" fill="#000"/><rect x="539" y="269" width="7" height="1.3" fill="#000"/><rect x="491" y="278" width="7" height="1.3" fill="#000"/><rect x="503" y="278" width="7" height="1.3" fill="#000"/><rect x="515" y="278" width="7" height="1.3" fill="#000"/><rect x="527" y="278" width="7" height="1.3" fill="#000"/><rect x="539" y="278" width="7" height="1.3" fill="#000"/><rect x="491" y="287" width="7" height="1.3" fill="#000"/><rect x="503" y="287" width="7" height="1.3" fill="#000"/><rect x="515" y="287" width="7" height="1.3" fill="#000"/><rect x="527" y="287" width="7" height="1.3" fill="#000"/><rect x="539" y="287" width="7" height="1.3" fill="#000"/><rect x="557" y="247" width="61" height="46" fill="#fff"/><rect x="557" y="256" width="61" height="9" fill="#d9e1f2"/><rect x="557" y="274" width="61" height="9" fill="#d9e1f2"/><rect x="557" y="247" width="61" height="1" fill="#4472c4"/><rect x="557" y="256" width="61" height="1" fill="#4472c4"/><rect x="557" y="265" width="61" height="1" fill="#4472c4"/><rect x="557" y="274" width="61" height="1" fill="#4472c4"/><rect x="557" y="283" width="61" height="1" fill="#4472c4"/><rect x="557" y="292" width="61" height="1" fill="#4472c4"/><rect x="557" y="247" width="1" height="46" fill="#4472c4"/><rect x="569" y="247" width="1" height="46" fill="#4472c4"/><rect x="581" y="247" width="1" height="46" fill="#4472c4"/><rect x="593" y="247" width="1" height="46" fill="#4472c4"/><rect x="605" y="247" width="1" height="46" fill="#4472c4"/><rect x="617" y="247" width="1" height="46" fill="#4472c4"/><rect x="560" y="251" width="7" height="1.3" fill="#000"/><rect x="572" y="251" width="7" height="1.3" fill="#000"/><rect x="584" y="251" width="7" height="1.3" fill="#000"/><rect x="596" y="251" width="7" height="1.3" fill="#000"/><rect x="608" y="251" width="7" height="1.3" fill="#000"/><rect x="560" y="260" width="7" height="1.3" fill="#000"/><rect x="572" y="260" width="7" height="1.3" fill="#000"/><rect x="584" y="260" width="7" height="1.3" fill="#000"/><rect x="596" y="260" width="7" height="1.3" fill="#000"/><rect x="608" y="260" width="7" height="1.3" fill="#000"/><rect x="560" y="269" width="7" height="1.3" fill="#000"/><rect x="572" y="269" width="7" height="1.3" fill="#000"/><rect x="584" y="269" width="7" height="1.3" fill="#000"/><rect x="596" y="269" width="7" height="1.3" fill="#000"/><rect x="608" y="269" width="7" height="1.3" fill="#000"/><rect x="560" y="278" width="7" height="1.3" fill="#000"/><rect x="572" y="278" width="7" height="1.3" fill="#000"/><rect x="584" y="278" width="7" height="1.3" fill="#000"/><rect x="596" y="278" width="7" height="1.3" fill="#000"/><rect x="608" y="278" width="7" height="1.3" fill="#000"/><rect x="560" y="287" width="7" height="1.3" fill="#000"/><rect x="572" y="287" width="7" height="1.3" fill="#000"/><rect x="584" y="287" width="7" height="1.3" fill="#000"/><rect x="596" y="287" width="7" height="1.3" fill="#000"/><rect x="608" y="287" width="7" height="1.3" fill="#000"/><rect x="626" y="247" width="61" height="46" fill="#fff"/><rect x="626" y="256" width="61" height="9" fill="#fce4d6"/><rect x="626" y="274" width="61" height="9" fill="#fce4d6"/><rect x="626" y="247" width="61" height="1" fill="#ed7d31"/><rect x="626" y="256" width="61" height="1" fill="#ed7d31"/><rect x="626" y="265" width="61" height="1" fill="#ed7d31"/><rect x="626" y="274" width="61" height="1" fill="#ed7d31"/><rect x="626" y="283" width="61" height="1" fill="#ed7d31"/><rect x="626" y="292" width="61" height="1" fill="#ed7d31"/><rect x="626" y="247" width="1" height="46" fill="#ed7d31"/><rect x="638" y="247" width="1" height="46" fill="#ed7d31"/><rect x="650" y="247" width="1" height="46" fill="#ed7d31"/><rect x="662" y="247" width="1" height="46" fill="#ed7d31"/><rect x="674" y="247" width="1" height="46" fill="#ed7d31"/><rect x="686" y="247" width="1" height="46" fill="#ed7d31"/><rect x="629" y="251" width="7" height="1.3" fill="#000"/><rect x="641" y="251" width="7" height="1.3" fill="#000"/><rect x="653" y="251" width="7" height="1.3" fill="#000"/><rect x="665" y="251" width="7" height="1.3" fill="#000"/><rect x="677" y="251" width="7" height="1.3" fill="#000"/><rect x="629" y="260" width="7" height="1.3" fill="#000"/><rect x="641" y="260" width="7" height="1.3" fill="#000"/><rect x="653" y="260" width="7" height="1.3" fill="#000"/><rect x="665" y="260" width="7" height="1.3" fill="#000"/><rect x="677" y="260" width="7" height="1.3" fill="#000"/><rect x="629" y="269" width="7" height="1.3" fill="#000"/><rect x="641" y="269" width="7" height="1.3" fill="#000"/><rect x="653" y="269" width="7" height="1.3" fill="#000"/><rect x="665" y="269" width="7" height="1.3" fill="#000"/><rect x="677" y="269" width="7" height="1.3" fill="#000"/><rect x="629" y="278" width="7" height="1.3" fill="#000"/><rect x="641" y="278" width="7" height="1.3" fill="#000"/><rect x="653" y="278" width="7" height="1.3" fill="#000"/><rect x="665" y="278" width="7" height="1.3" fill="#000"/><rect x="677" y="278" width="7" height="1.3" fill="#000"/><rect x="629" y="287" width="7" height="1.3" fill="#000"/><rect x="641" y="287" width="7" height="1.3" fill="#000"/><rect x="653" y="287" width="7" height="1.3" fill="#000"/><rect x="665" y="287" width="7" height="1.3" fill="#000"/><rect x="677" y="287" width="7" height="1.3" fill="#000"/><rect x="488" y="340" width="61" height="46" fill="#fff"/><rect x="488" y="349" width="61" height="9" fill="#d9d9d9"/><rect x="488" y="367" width="61" height="9" fill="#d9d9d9"/><rect x="488" y="340" width="61" height="10" fill="#000"/><rect x="488" y="358" width="61" height="1" fill="#000"/><rect x="488" y="367" width="61" height="1" fill="#000"/><rect x="488" y="376" width="61" height="1" fill="#000"/><rect x="488" y="385" width="61" height="1" fill="#000"/><rect x="488" y="349" width="1" height="37" fill="#000"/><rect x="548" y="349" width="1" height="37" fill="#000"/><rect x="491" y="344" width="7" height="1.3" fill="#fff"/><rect x="503" y="344" width="7" height="1.3" fill="#fff"/><rect x="515" y="344" width="7" height="1.3" fill="#fff"/><rect x="527" y="344" width="7" height="1.3" fill="#fff"/><rect x="539" y="344" width="7" height="1.3" fill="#fff"/><rect x="491" y="353" width="7" height="1.3" fill="#000"/><rect x="503" y="353" width="7" height="1.3" fill="#000"/><rect x="515" y="353" width="7" height="1.3" fill="#000"/><rect x="527" y="353" width="7" height="1.3" fill="#000"/><rect x="539" y="353" width="7" height="1.3" fill="#000"/><rect x="491" y="362" width="7" height="1.3" fill="#000"/><rect x="503" y="362" width="7" height="1.3" fill="#000"/><rect x="515" y="362" width="7" height="1.3" fill="#000"/><rect x="527" y="362" width="7" height="1.3" fill="#000"/><rect x="539" y="362" width="7" height="1.3" fill="#000"/><rect x="491" y="371" width="7" height="1.3" fill="#000"/><rect x="503" y="371" width="7" height="1.3" fill="#000"/><rect x="515" y="371" width="7" height="1.3" fill="#000"/><rect x="527" y="371" width="7" height="1.3" fill="#000"/><rect x="539" y="371" width="7" height="1.3" fill="#000"/><rect x="491" y="380" width="7" height="1.3" fill="#000"/><rect x="503" y="380" width="7" height="1.3" fill="#000"/><rect x="515" y="380" width="7" height="1.3" fill="#000"/><rect x="527" y="380" width="7" height="1.3" fill="#000"/><rect x="539" y="380" width="7" height="1.3" fill="#000"/><rect x="553.5" y="337.5" width="67" height="52" fill="#b4b4b4" stroke="#e94646" stroke-width="3"/><rect x="557" y="340" width="61" height="46" fill="#fff"/><rect x="557" y="349" width="61" height="9" fill="#d9e1f2"/><rect x="557" y="367" width="61" height="9" fill="#d9e1f2"/><rect x="557" y="340" width="61" height="10" fill="#4472c4"/><rect x="557" y="358" width="61" height="1" fill="#8ea9db"/><rect x="557" y="367" width="61" height="1" fill="#8ea9db"/><rect x="557" y="376" width="61" height="1" fill="#8ea9db"/><rect x="557" y="385" width="61" height="1" fill="#8ea9db"/><rect x="557" y="349" width="1" height="37" fill="#8ea9db"/><rect x="617" y="349" width="1" height="37" fill="#8ea9db"/><rect x="560" y="344" width="7" height="1.3" fill="#fff"/><rect x="572" y="344" width="7" height="1.3" fill="#fff"/><rect x="584" y="344" width="7" height="1.3" fill="#fff"/><rect x="596" y="344" width="7" height="1.3" fill="#fff"/><rect x="608" y="344" width="7" height="1.3" fill="#fff"/><rect x="560" y="353" width="7" height="1.3" fill="#000"/><rect x="572" y="353" width="7" height="1.3" fill="#000"/><rect x="584" y="353" width="7" height="1.3" fill="#000"/><rect x="596" y="353" width="7" height="1.3" fill="#000"/><rect x="608" y="353" width="7" height="1.3" fill="#000"/><rect x="560" y="362" width="7" height="1.3" fill="#000"/><rect x="572" y="362" width="7" height="1.3" fill="#000"/><rect x="584" y="362" width="7" height="1.3" fill="#000"/><rect x="596" y="362" width="7" height="1.3" fill="#000"/><rect x="608" y="362" width="7" height="1.3" fill="#000"/><rect x="560" y="371" width="7" height="1.3" fill="#000"/><rect x="572" y="371" width="7" height="1.3" fill="#000"/><rect x="584" y="371" width="7" height="1.3" fill="#000"/><rect x="596" y="371" width="7" height="1.3" fill="#000"/><rect x="608" y="371" width="7" height="1.3" fill="#000"/><rect x="560" y="380" width="7" height="1.3" fill="#000"/><rect x="572" y="380" width="7" height="1.3" fill="#000"/><rect x="584" y="380" width="7" height="1.3" fill="#000"/><rect x="596" y="380" width="7" height="1.3" fill="#000"/><rect x="608" y="380" width="7" height="1.3" fill="#000"/><rect x="626" y="340" width="61" height="46" fill="#fff"/><rect x="626" y="349" width="61" height="9" fill="#fce4d6"/><rect x="626" y="367" width="61" height="9" fill="#fce4d6"/><rect x="626" y="340" width="61" height="10" fill="#ed7d31"/><rect x="626" y="358" width="61" height="1" fill="#f4b084"/><rect x="626" y="367" width="61" height="1" fill="#f4b084"/><rect x="626" y="376" width="61" height="1" fill="#f4b084"/><rect x="626" y="385" width="61" height="1" fill="#f4b084"/><rect x="626" y="349" width="1" height="37" fill="#f4b084"/><rect x="686" y="349" width="1" height="37" fill="#f4b084"/><rect x="629" y="344" width="7" height="1.3" fill="#fff"/><rect x="641" y="344" width="7" height="1.3" fill="#fff"/><rect x="653" y="344" width="7" height="1.3" fill="#fff"/><rect x="665" y="344" width="7" height="1.3" fill="#fff"/><rect x="677" y="344" width="7" height="1.3" fill="#fff"/><rect x="629" y="353" width="7" height="1.3" fill="#000"/><rect x="641" y="353" width="7" height="1.3" fill="#000"/><rect x="653" y="353" width="7" height="1.3" fill="#000"/><rect x="665" y="353" width="7" height="1.3" fill="#000"/><rect x="677" y="353" width="7" height="1.3" fill="#000"/><rect x="629" y="362" width="7" height="1.3" fill="#000"/><rect x="641" y="362" width="7" height="1.3" fill="#000"/><rect x="653" y="362" width="7" height="1.3" fill="#000"/><rect x="665" y="362" width="7" height="1.3" fill="#000"/><rect x="677" y="362" width="7" height="1.3" fill="#000"/><rect x="629" y="371" width="7" height="1.3" fill="#000"/><rect x="641" y="371" width="7" height="1.3" fill="#000"/><rect x="653" y="371" width="7" height="1.3" fill="#000"/><rect x="665" y="371" width="7" height="1.3" fill="#000"/><rect x="677" y="371" width="7" height="1.3" fill="#000"/><rect x="629" y="380" width="7" height="1.3" fill="#000"/><rect x="641" y="380" width="7" height="1.3" fill="#000"/><rect x="653" y="380" width="7" height="1.3" fill="#000"/><rect x="665" y="380" width="7" height="1.3" fill="#000"/><rect x="677" y="380" width="7" height="1.3" fill="#000"/><rect x="488" y="394" width="61" height="46" fill="#fff"/><rect x="488" y="394" width="12" height="9" fill="#000"/><rect x="491" y="398" width="7" height="1.4" fill="#fff"/><rect x="501" y="394" width="11" height="9" fill="#000"/><rect x="503" y="398" width="7" height="1.4" fill="#fff"/><rect x="513" y="394" width="11" height="9" fill="#000"/><rect x="515" y="398" width="7" height="1.4" fill="#fff"/><rect x="525" y="394" width="11" height="9" fill="#000"/><rect x="527" y="398" width="7" height="1.4" fill="#fff"/><rect x="537" y="394" width="12" height="9" fill="#000"/><rect x="539" y="398" width="7" height="1.4" fill="#fff"/><rect x="488" y="404" width="12" height="8" fill="#a6a6a6"/><rect x="491" y="407" width="7" height="1.4" fill="#000"/><rect x="501" y="404" width="11" height="8" fill="#a6a6a6"/><rect x="503" y="407" width="7" height="1.4" fill="#000"/><rect x="513" y="404" width="11" height="8" fill="#a6a6a6"/><rect x="515" y="407" width="7" height="1.4" fill="#000"/><rect x="525" y="404" width="11" height="8" fill="#a6a6a6"/><rect x="527" y="407" width="7" height="1.4" fill="#000"/><rect x="537" y="404" width="12" height="8" fill="#a6a6a6"/><rect x="539" y="407" width="7" height="1.4" fill="#000"/><rect x="488" y="413" width="12" height="8" fill="#d9d9d9"/><rect x="491" y="416" width="7" height="1.4" fill="#000"/><rect x="501" y="413" width="11" height="8" fill="#d9d9d9"/><rect x="503" y="416" width="7" height="1.4" fill="#000"/><rect x="513" y="413" width="11" height="8" fill="#d9d9d9"/><rect x="515" y="416" width="7" height="1.4" fill="#000"/><rect x="525" y="413" width="11" height="8" fill="#d9d9d9"/><rect x="527" y="416" width="7" height="1.4" fill="#000"/><rect x="537" y="413" width="12" height="8" fill="#d9d9d9"/><rect x="539" y="416" width="7" height="1.4" fill="#000"/><rect x="488" y="422" width="12" height="8" fill="#a6a6a6"/><rect x="491" y="425" width="7" height="1.4" fill="#000"/><rect x="501" y="422" width="11" height="8" fill="#a6a6a6"/><rect x="503" y="425" width="7" height="1.4" fill="#000"/><rect x="513" y="422" width="11" height="8" fill="#a6a6a6"/><rect x="515" y="425" width="7" height="1.4" fill="#000"/><rect x="525" y="422" width="11" height="8" fill="#a6a6a6"/><rect x="527" y="425" width="7" height="1.4" fill="#000"/><rect x="537" y="422" width="12" height="8" fill="#a6a6a6"/><rect x="539" y="425" width="7" height="1.4" fill="#000"/><rect x="488" y="431" width="12" height="10" fill="#d9d9d9"/><rect x="491" y="434" width="7" height="1.4" fill="#000"/><rect x="501" y="431" width="11" height="10" fill="#d9d9d9"/><rect x="503" y="434" width="7" height="1.4" fill="#000"/><rect x="513" y="431" width="11" height="10" fill="#d9d9d9"/><rect x="515" y="434" width="7" height="1.4" fill="#000"/><rect x="525" y="431" width="11" height="10" fill="#d9d9d9"/><rect x="527" y="434" width="7" height="1.4" fill="#000"/><rect x="537" y="431" width="12" height="10" fill="#d9d9d9"/><rect x="539" y="434" width="7" height="1.4" fill="#000"/><rect x="557" y="394" width="61" height="46" fill="#fff"/><rect x="557" y="394" width="12" height="9" fill="#4472c4"/><rect x="560" y="398" width="7" height="1.4" fill="#fff"/><rect x="570" y="394" width="11" height="9" fill="#4472c4"/><rect x="572" y="398" width="7" height="1.4" fill="#fff"/><rect x="582" y="394" width="11" height="9" fill="#4472c4"/><rect x="584" y="398" width="7" height="1.4" fill="#fff"/><rect x="594" y="394" width="11" height="9" fill="#4472c4"/><rect x="596" y="398" width="7" height="1.4" fill="#fff"/><rect x="606" y="394" width="12" height="9" fill="#4472c4"/><rect x="608" y="398" width="7" height="1.4" fill="#fff"/><rect x="557" y="404" width="12" height="8" fill="#b4c6e7"/><rect x="560" y="407" width="7" height="1.4" fill="#000"/><rect x="570" y="404" width="11" height="8" fill="#b4c6e7"/><rect x="572" y="407" width="7" height="1.4" fill="#000"/><rect x="582" y="404" width="11" height="8" fill="#b4c6e7"/><rect x="584" y="407" width="7" height="1.4" fill="#000"/><rect x="594" y="404" width="11" height="8" fill="#b4c6e7"/><rect x="596" y="407" width="7" height="1.4" fill="#000"/><rect x="606" y="404" width="12" height="8" fill="#b4c6e7"/><rect x="608" y="407" width="7" height="1.4" fill="#000"/><rect x="557" y="413" width="12" height="8" fill="#d9e1f2"/><rect x="560" y="416" width="7" height="1.4" fill="#000"/><rect x="570" y="413" width="11" height="8" fill="#d9e1f2"/><rect x="572" y="416" width="7" height="1.4" fill="#000"/><rect x="582" y="413" width="11" height="8" fill="#d9e1f2"/><rect x="584" y="416" width="7" height="1.4" fill="#000"/><rect x="594" y="413" width="11" height="8" fill="#d9e1f2"/><rect x="596" y="416" width="7" height="1.4" fill="#000"/><rect x="606" y="413" width="12" height="8" fill="#d9e1f2"/><rect x="608" y="416" width="7" height="1.4" fill="#000"/><rect x="557" y="422" width="12" height="8" fill="#b4c6e7"/><rect x="560" y="425" width="7" height="1.4" fill="#000"/><rect x="570" y="422" width="11" height="8" fill="#b4c6e7"/><rect x="572" y="425" width="7" height="1.4" fill="#000"/><rect x="582" y="422" width="11" height="8" fill="#b4c6e7"/><rect x="584" y="425" width="7" height="1.4" fill="#000"/><rect x="594" y="422" width="11" height="8" fill="#b4c6e7"/><rect x="596" y="425" width="7" height="1.4" fill="#000"/><rect x="606" y="422" width="12" height="8" fill="#b4c6e7"/><rect x="608" y="425" width="7" height="1.4" fill="#000"/><rect x="557" y="431" width="12" height="10" fill="#d9e1f2"/><rect x="560" y="434" width="7" height="1.4" fill="#000"/><rect x="570" y="431" width="11" height="10" fill="#d9e1f2"/><rect x="572" y="434" width="7" height="1.4" fill="#000"/><rect x="582" y="431" width="11" height="10" fill="#d9e1f2"/><rect x="584" y="434" width="7" height="1.4" fill="#000"/><rect x="594" y="431" width="11" height="10" fill="#d9e1f2"/><rect x="596" y="434" width="7" height="1.4" fill="#000"/><rect x="606" y="431" width="12" height="10" fill="#d9e1f2"/><rect x="608" y="434" width="7" height="1.4" fill="#000"/><rect x="626" y="394" width="61" height="46" fill="#fff"/><rect x="626" y="394" width="12" height="9" fill="#ed7d31"/><rect x="629" y="398" width="7" height="1.4" fill="#fff"/><rect x="639" y="394" width="11" height="9" fill="#ed7d31"/><rect x="641" y="398" width="7" height="1.4" fill="#fff"/><rect x="651" y="394" width="11" height="9" fill="#ed7d31"/><rect x="653" y="398" width="7" height="1.4" fill="#fff"/><rect x="663" y="394" width="11" height="9" fill="#ed7d31"/><rect x="665" y="398" width="7" height="1.4" fill="#fff"/><rect x="675" y="394" width="12" height="9" fill="#ed7d31"/><rect x="677" y="398" width="7" height="1.4" fill="#fff"/><rect x="626" y="404" width="12" height="8" fill="#f8cbad"/><rect x="629" y="407" width="7" height="1.4" fill="#000"/><rect x="639" y="404" width="11" height="8" fill="#f8cbad"/><rect x="641" y="407" width="7" height="1.4" fill="#000"/><rect x="651" y="404" width="11" height="8" fill="#f8cbad"/><rect x="653" y="407" width="7" height="1.4" fill="#000"/><rect x="663" y="404" width="11" height="8" fill="#f8cbad"/><rect x="665" y="407" width="7" height="1.4" fill="#000"/><rect x="675" y="404" width="12" height="8" fill="#f8cbad"/><rect x="677" y="407" width="7" height="1.4" fill="#000"/><rect x="626" y="413" width="12" height="8" fill="#fce4d6"/><rect x="629" y="416" width="7" height="1.4" fill="#000"/><rect x="639" y="413" width="11" height="8" fill="#fce4d6"/><rect x="641" y="416" width="7" height="1.4" fill="#000"/><rect x="651" y="413" width="11" height="8" fill="#fce4d6"/><rect x="653" y="416" width="7" height="1.4" fill="#000"/><rect x="663" y="413" width="11" height="8" fill="#fce4d6"/><rect x="665" y="416" width="7" height="1.4" fill="#000"/><rect x="675" y="413" width="12" height="8" fill="#fce4d6"/><rect x="677" y="416" width="7" height="1.4" fill="#000"/><rect x="626" y="422" width="12" height="8" fill="#f8cbad"/><rect x="629" y="425" width="7" height="1.4" fill="#000"/><rect x="639" y="422" width="11" height="8" fill="#f8cbad"/><rect x="641" y="425" width="7" height="1.4" fill="#000"/><rect x="651" y="422" width="11" height="8" fill="#f8cbad"/><rect x="653" y="425" width="7" height="1.4" fill="#000"/><rect x="663" y="422" width="11" height="8" fill="#f8cbad"/><rect x="665" y="425" width="7" height="1.4" fill="#000"/><rect x="675" y="422" width="12" height="8" fill="#f8cbad"/><rect x="677" y="425" width="7" height="1.4" fill="#000"/><rect x="626" y="431" width="12" height="10" fill="#fce4d6"/><rect x="629" y="434" width="7" height="1.4" fill="#000"/><rect x="639" y="431" width="11" height="10" fill="#fce4d6"/><rect x="641" y="434" width="7" height="1.4" fill="#000"/><rect x="651" y="431" width="11" height="10" fill="#fce4d6"/><rect x="653" y="434" width="7" height="1.4" fill="#000"/><rect x="663" y="431" width="11" height="10" fill="#fce4d6"/><rect x="665" y="434" width="7" height="1.4" fill="#000"/><rect x="675" y="431" width="12" height="10" fill="#fce4d6"/><rect x="677" y="434" width="7" height="1.4" fill="#000"/></svg>
<svg style="left:0;top:0" width="694" height="440" viewBox="0 0 694 440"><rect x="0" y="0" width="1" height="440" fill="#f7f7f7"/><rect x="0" y="21" width="1.5" height="1" fill="#b0b0b0"/><rect x="0" y="41" width="1.5" height="1" fill="#b0b0b0"/><rect x="0" y="61" width="1.5" height="1" fill="#b0b0b0"/><rect x="0" y="81" width="1.5" height="1" fill="#b0b0b0"/><rect x="0" y="101" width="1.5" height="1" fill="#b0b0b0"/><rect x="0" y="121" width="1.5" height="1" fill="#b0b0b0"/><rect x="0" y="141" width="1.5" height="1" fill="#b0b0b0"/><rect x="0" y="161" width="1.5" height="1" fill="#b0b0b0"/><rect x="0" y="181" width="1.5" height="1" fill="#b0b0b0"/><rect x="0" y="201" width="1.5" height="1" fill="#b0b0b0"/><rect x="0" y="221" width="1.5" height="1" fill="#b0b0b0"/><rect x="0" y="241" width="1.5" height="1" fill="#b0b0b0"/><rect x="0" y="261" width="1.5" height="1" fill="#b0b0b0"/><rect x="0" y="281" width="1.5" height="1" fill="#b0b0b0"/><rect x="0" y="301" width="1.5" height="1" fill="#b0b0b0"/><rect x="0" y="321" width="1.5" height="1" fill="#b0b0b0"/><rect x="0" y="341" width="1.5" height="1" fill="#b0b0b0"/><rect x="0" y="361" width="1.5" height="1" fill="#b0b0b0"/><rect x="0" y="381" width="1.5" height="1" fill="#b0b0b0"/><rect x="0" y="401" width="1.5" height="1" fill="#b0b0b0"/><rect x="0" y="421" width="1.5" height="1" fill="#b0b0b0"/></svg>
</body></html>
